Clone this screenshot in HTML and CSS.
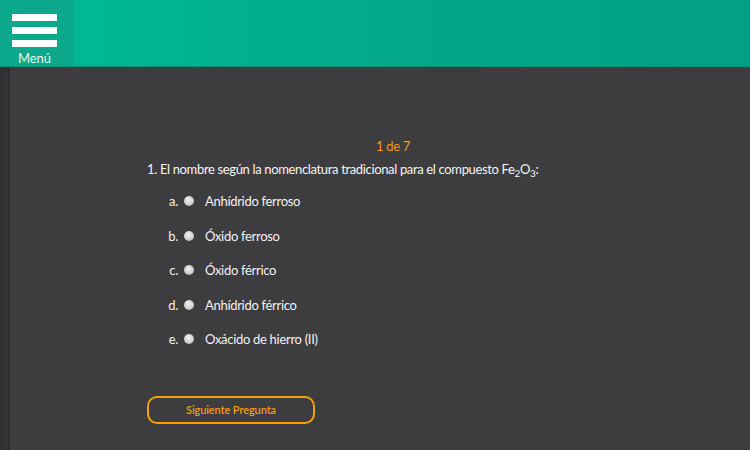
FILE: index.html
```html
<!DOCTYPE html>
<html lang="es">
<head>
<meta charset="utf-8">
<title>Quiz</title>
<link rel="stylesheet" href="styles.css">
</head>
<body>
<header class="topbar">
  <button class="menu-btn">
    <span class="bars"><span></span><span></span><span></span></span>
    <span class="menu-label">Menú</span>
  </button>
</header>
<div class="page">
  <div class="edge"></div>
  <main class="quiz">
    <div class="counter">1 de 7</div>
    <p class="question">1. El nombre según la nomenclatura tradicional para el compuesto Fe<sub>2</sub>O<sub>3</sub>:</p>
    <ol class="options">
      <li><span class="letter">a.</span><span class="radio"></span><span class="opt">Anhídrido ferroso</span></li>
      <li><span class="letter">b.</span><span class="radio"></span><span class="opt">Óxido ferroso</span></li>
      <li><span class="letter">c.</span><span class="radio"></span><span class="opt">Óxido férrico</span></li>
      <li><span class="letter">d.</span><span class="radio"></span><span class="opt">Anhídrido férrico</span></li>
      <li><span class="letter">e.</span><span class="radio"></span><span class="opt">Oxácido de hierro (II)</span></li>
    </ol>
    <button class="next">Siguiente Pregunta</button>
  </main>
</div>
</body>
</html>
```
FILE: styles.css
```css
* { box-sizing: border-box; }
html, body { margin: 0; padding: 0; height: 100%; }
body {
  font-family: Lato, "Open Sans", sans-serif;
  background: #3d3c3e;
  color: #f2f2f2;
  overflow: hidden;
}
.topbar {
  height: 67px;
  display: flex;
  background: linear-gradient(to right, #00bb97 0%, #02a888 55%, #039f84 100%);
  border-bottom: 1px solid #0b8f76;
}
.menu-btn {
  width: 75px;
  height: 66px;
  border: 0;
  margin: 0;
  padding: 14px 6px 0 0;
  background: #0ca88b;
  display: flex;
  flex-direction: column;
  align-items: center;
  cursor: pointer;
}
.bars { display: flex; flex-direction: column; gap: 6px; }
.bars span { display: block; width: 45px; height: 7px; background: #ffffff; }
.menu-label {
  font-family: Lato, sans-serif;
  font-size: 13px;
  color: #e6f7f3;
  margin-top: 4px;
  line-height: 14px;
}
.page { display: flex; height: calc(100% - 67px); }
.edge {
  width: 10px;
  flex: none;
  background: linear-gradient(to right, #303031 0%, #333334 75%, #282829 90%, #3a393b 100%);
}
.quiz {
  flex: 1;
  padding: 71px 0 0 137px;
  width: 100%;
}
.counter {
  width: 492px;
  text-align: center;
  color: #f39c12;
  font-size: 13px;
  line-height: 16px;
  letter-spacing: -0.3px;
}
.question {
  margin: 6px 0 0;
  font-size: 13px;
  line-height: 18px;
  letter-spacing: -0.35px;
  color: #f4f4f4;
}
.question sub { font-size: 10px; vertical-align: -3px; line-height: 0; }
.options { list-style: none; margin: 6px 0 0; padding: 0; }
.options li {
  display: flex;
  align-items: center;
  height: 34.5px;
  font-size: 13px;
  letter-spacing: -0.3px;
}
.letter { width: 37px; text-align: right; padding-right: 6px; }
.radio {
  width: 10px; height: 10px; border-radius: 50%;
  background: radial-gradient(circle at 45% 40%, #f4f4f4 0%, #d6d6d6 45%, #a9a9a9 100%);
  margin-right: 11px;
}
.next {
  margin-top: 39px;
  width: 168px;
  height: 28px;
  background: transparent;
  border: 2px solid #f7a100;
  border-radius: 10px;
  color: #f39c12;
  font-family: Lato, sans-serif;
  font-size: 11px;
  font-weight: 600;
  letter-spacing: -0.1px;
  cursor: pointer;
}
```
